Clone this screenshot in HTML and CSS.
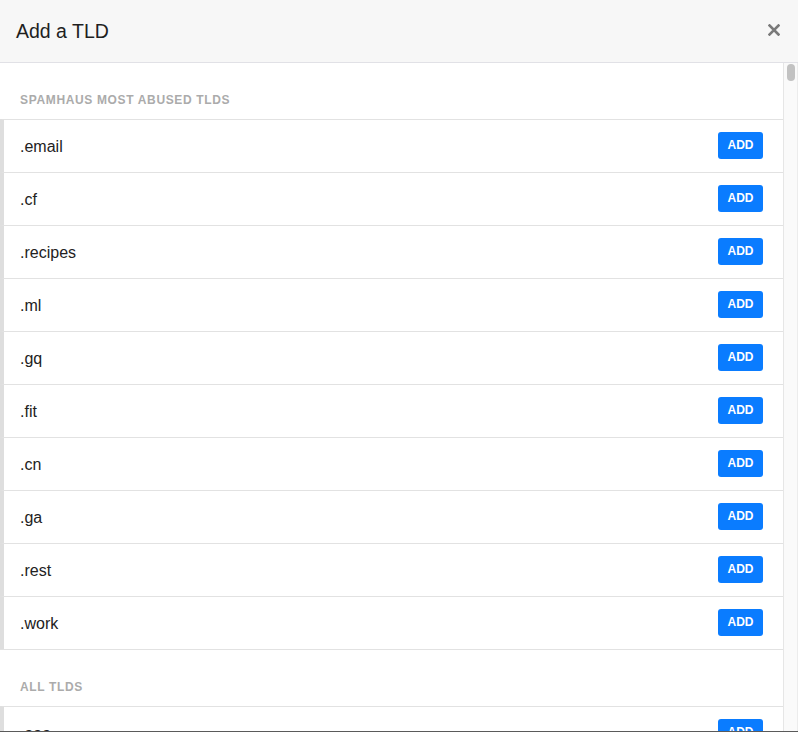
FILE: index.html
```html
<!DOCTYPE html>
<html>
<head>
<meta charset="utf-8">
<title>Add a TLD</title>
<link rel="stylesheet" href="styles.css">
</head>
<body>
<div class="modal">
  <div class="modal-header">
    <h1 class="modal-title">Add a TLD</h1>
    <button class="close" aria-label="Close">
      <svg width="12" height="12" viewBox="0 0 12 12"><path d="M1.5 1.5 L10.5 10.5 M10.5 1.5 L1.5 10.5" stroke="#7a7a7a" stroke-width="2.6" stroke-linecap="square"/></svg>
    </button>
  </div>
  <div class="modal-body">
    <div class="content">
      <div class="section-title">Spamhaus most abused TLDs</div>
      <ul class="tld-list">
        <li class="tld-row"><span class="tld-name">.email</span><button class="btn-add">ADD</button></li>
        <li class="tld-row"><span class="tld-name">.cf</span><button class="btn-add">ADD</button></li>
        <li class="tld-row"><span class="tld-name">.recipes</span><button class="btn-add">ADD</button></li>
        <li class="tld-row"><span class="tld-name">.ml</span><button class="btn-add">ADD</button></li>
        <li class="tld-row"><span class="tld-name">.gq</span><button class="btn-add">ADD</button></li>
        <li class="tld-row"><span class="tld-name">.fit</span><button class="btn-add">ADD</button></li>
        <li class="tld-row"><span class="tld-name">.cn</span><button class="btn-add">ADD</button></li>
        <li class="tld-row"><span class="tld-name">.ga</span><button class="btn-add">ADD</button></li>
        <li class="tld-row"><span class="tld-name">.rest</span><button class="btn-add">ADD</button></li>
        <li class="tld-row"><span class="tld-name">.work</span><button class="btn-add">ADD</button></li>
      </ul>
      <div class="section-title">All TLDs</div>
      <ul class="tld-list">
        <li class="tld-row"><span class="tld-name">.aaa</span><button class="btn-add">ADD</button></li>
        <li class="tld-row"><span class="tld-name">.aarp</span><button class="btn-add">ADD</button></li>
      </ul>
    </div>
    <div class="scrollbar"><div class="thumb"></div></div>
  </div>
</div>
</body>
</html>
```

FILE: styles.css
```css
* { box-sizing: border-box; }
html, body {
  margin: 0;
  padding: 0;
  height: 100%;
  overflow: hidden;
  background: #fff;
}
body {
  font-family: "Liberation Sans", Arial, sans-serif;
  color: #212529;
}
.modal {
  display: flex;
  flex-direction: column;
  height: 732px;
  width: 798px;
}
.modal-header {
  height: 63px;
  flex: none;
  background: #f7f7f7;
  border-bottom: 1px solid #e1e1e6;
  display: flex;
  align-items: center;
  justify-content: space-between;
  padding: 0 16px 0 16px;
}
.modal-title {
  margin: 0;
  font-size: 19.5px;
  font-weight: 400;
  color: #1f1f1f;
  line-height: 24px;
  padding-bottom: 1px;
}
.close {
  background: none;
  border: 0;
  padding: 0;
  margin: 0 2px 2px 0;
  width: 12px;
  height: 12px;
  display: flex;
  cursor: pointer;
}
.modal-body {
  flex: 1;
  display: flex;
  min-height: 0;
  border-bottom: 1px solid #5a5a5a;
}
.content {
  flex: 1;
  overflow: hidden;
}
.section-title {
  padding: 29px 20px 11px;
  line-height: 16px;
  font-size: 12px;
  font-weight: 700;
  letter-spacing: 0.65px;
  text-transform: uppercase;
  color: #ababab;
}
.tld-list {
  list-style: none;
  margin: 0;
  padding: 0;
  border-bottom: 1px solid #e2e2e2;
}
.tld-row {
  height: 53px;
  border-top: 1px solid #e2e2e2;
  border-left: 4px solid #dedede;
  display: flex;
  align-items: center;
  justify-content: space-between;
  padding: 0 20px 0 16px;
}
.tld-name {
  font-size: 16px;
  color: #222;
  margin-top: 2px;
}
.btn-add {
  width: 45px;
  height: 27px;
  margin-bottom: 1px;
  border: 0;
  border-radius: 3px;
  background: #0a7cff;
  color: #fff;
  font-family: "Liberation Sans", Arial, sans-serif;
  font-size: 12px;
  font-weight: 700;
  padding: 0;
  line-height: 27px;
}
.scrollbar {
  width: 15px;
  flex: none;
  background: #fafafa;
  border-left: 1px solid #e6e6e6;
  border-right: 1px solid #ececec;
  padding: 1px 2px 0 3px;
}
.thumb {
  width: 8px;
  height: 17px;
  border-radius: 4px;
  background: #c2c2c2;
}
```
